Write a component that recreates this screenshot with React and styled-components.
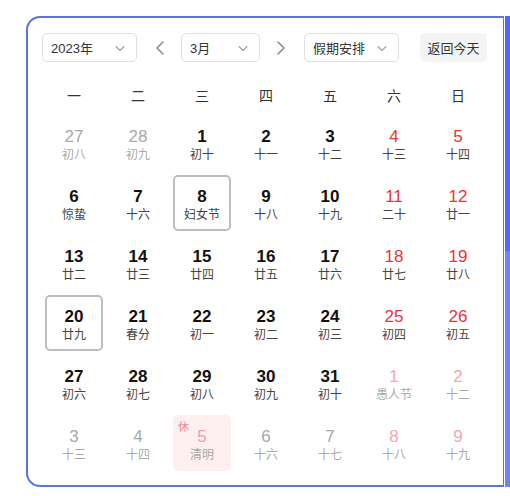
import React from 'react';
import styled, { createGlobalStyle } from 'styled-components';

const GlobalStyle = createGlobalStyle`
  body {
    margin: 0;
    background: #fff;
    font-family: "Liberation Sans", "Noto Sans CJK SC", sans-serif;
  }
`;

const weekNames = ['一', '二', '三', '四', '五', '六', '日'];

// kind: '' normal, 'other' other month, 'box' outlined, 'rest' holiday
const days = [
  ['27', '初八', 'other'], ['28', '初九', 'other'], ['1', '初十'], ['2', '十一'], ['3', '十二'], ['4', '十三'], ['5', '十四'],
  ['6', '惊蛰'], ['7', '十六'], ['8', '妇女节', 'box'], ['9', '十八'], ['10', '十九'], ['11', '二十'], ['12', '廿一'],
  ['13', '廿二'], ['14', '廿三'], ['15', '廿四'], ['16', '廿五'], ['17', '廿六'], ['18', '廿七'], ['19', '廿八'],
  ['20', '廿九', 'box'], ['21', '春分'], ['22', '初一'], ['23', '初二'], ['24', '初三'], ['25', '初四'], ['26', '初五'],
  ['27', '初六'], ['28', '初七'], ['29', '初八'], ['30', '初九'], ['31', '初十'], ['1', '愚人节', 'other'], ['2', '十二', 'other'],
  ['3', '十三', 'other'], ['4', '十四', 'other'], ['5', '清明', 'rest'], ['6', '十六', 'other'], ['7', '十七', 'other'], ['8', '十八', 'other'], ['9', '十九', 'other'],
];

const Chevron = ({ dir = 'down', size = 12 }) => {
  const paths = {
    down: 'M2 4.5 L6 8.5 L10 4.5',
    left: 'M7.5 1.5 L3 6 L7.5 10.5',
    right: 'M4.5 1.5 L9 6 L4.5 10.5',
  };
  return (
    <svg width={size} height={size} viewBox="0 0 12 12" fill="none">
      <path d={paths[dir]} stroke="currentColor" strokeWidth="1.1" strokeLinecap="round" strokeLinejoin="round" />
    </svg>
  );
};

const App = () => (
  <>
    <GlobalStyle />
    <Page>
      <Card>
        <Toolbar>
          <Select $w={95}>
            <span>2023年</span>
            <Chevron />
          </Select>
          <Arrow $ml={12}>
            <Chevron dir="left" size={16} />
          </Arrow>
          <Select $w={79}>
            <span>3月</span>
            <Chevron />
          </Select>
          <Arrow $ml={8}>
            <Chevron dir="right" size={16} />
          </Arrow>
          <Select $w={95} $ml={4}>
            <span>假期安排</span>
            <Chevron />
          </Select>
          <TodayButton>返回今天</TodayButton>
        </Toolbar>
        <WeekRow>
          {weekNames.map((w) => (
            <WeekName key={w}>{w}</WeekName>
          ))}
        </WeekRow>
        <DayGrid>
          {days.map(([num, lunar, kind = ''], i) => {
            const weekend = i % 7 >= 5;
            return (
              <Day key={i} $kind={kind}>
                {kind === 'rest' && <RestTag>休</RestTag>}
                <DayNum $kind={kind} $weekend={weekend}>{num}</DayNum>
                <Lunar $kind={kind}>{lunar}</Lunar>
              </Day>
            );
          })}
        </DayGrid>
      </Card>
      <SideBar />
    </Page>
  </>
);

export default App;

const Page = styled.div`
  display: flex;
  align-items: stretch;
  padding: 16px 0 0 26px;
`;

const Card = styled.div`
  width: 449px;
  border: 2px solid #5a75dc;
  border-right-width: 1px;
  border-radius: 14px 0 0 14px;
  padding: 15px 13px 14px 14px;
  background: #fff;
`;

const SideBar = styled.div`
  width: 5px;
  margin-left: 1px;
  background: linear-gradient(#4d6df2 0%, #4d6df2 50%, #6d86f2 50%, #6d86f2 100%);
`;

const Toolbar = styled.div`
  display: flex;
  align-items: center;
  height: 29px;
`;

const Select = styled.div`
  box-sizing: border-box;
  width: ${(p) => p.$w}px;
  height: 29px;
  margin-left: ${(p) => p.$ml || 0}px;
  display: flex;
  align-items: center;
  justify-content: space-between;
  padding: 0 10px 0 8px;
  border: 1px solid #dcdfe6;
  border-radius: 5px;
  font-size: 13px;
  color: #333;
  svg {
    color: #a0a0a0;
  }
`;

const Arrow = styled.div`
  width: 24px;
  height: 29px;
  margin-left: ${(p) => p.$ml}px;
  margin-right: 8px;
  display: flex;
  align-items: center;
  justify-content: center;
  color: #888;
`;

const TodayButton = styled.div`
  margin-left: 21px;
  width: 67px;
  height: 29px;
  display: flex;
  align-items: center;
  justify-content: center;
  background: #f4f4f5;
  border-radius: 5px;
  font-size: 13px;
  color: #333;
`;

const WeekRow = styled.div`
  display: grid;
  grid-template-columns: repeat(7, 64px);
  margin-top: 16px;
  height: 33px;
  align-items: center;
`;

const WeekName = styled.div`
  text-align: center;
  font-size: 14px;
  color: #333;
`;

const DayGrid = styled.div`
  display: grid;
  grid-template-columns: repeat(7, 64px);
  grid-auto-rows: 56px;
  row-gap: 4px;
  margin-top: 4px;
`;

const Day = styled.div`
  position: relative;
  box-sizing: border-box;
  width: 58px;
  justify-self: center;
  display: flex;
  flex-direction: column;
  align-items: center;
  padding-top: ${(p) => (p.$kind === 'box' ? 10 : 12)}px;
  border-radius: 5px;
  border: ${(p) => (p.$kind === 'box' ? '2px solid #bcbcc2' : 'none')};
  background: ${(p) => (p.$kind === 'rest' ? '#fdeff0' : 'transparent')};
`;

const dayColor = (p) => {
  if (p.$kind === 'other') return p.$weekend ? '#f2a7ae' : '#a8a8a8';
  if (p.$kind === 'rest') return '#f2a0a8';
  return p.$weekend ? '#e8333c' : '#111';
};

const DayNum = styled.div`
  font-size: 17px;
  line-height: 20px;
  font-weight: ${(p) => (p.$kind === 'other' || p.$kind === 'rest' || p.$weekend ? 400 : 700)};
  color: ${dayColor};
`;

const Lunar = styled.div`
  font-size: 12px;
  line-height: 16px;
  color: ${(p) => (p.$kind === 'other' || p.$kind === 'rest' ? '#aaa' : '#444')};
`;

const RestTag = styled.span`
  position: absolute;
  top: 3px;
  left: 5px;
  font-size: 11px;
  color: #f08890;
`;
